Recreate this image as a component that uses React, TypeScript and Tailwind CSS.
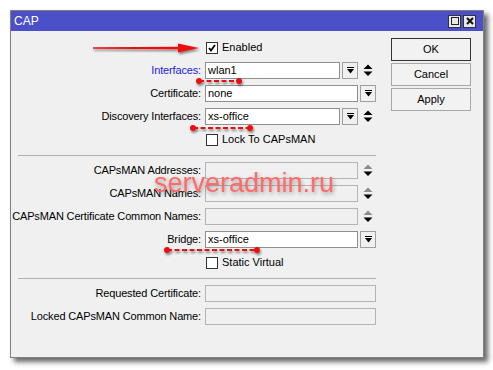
import React from "react";

function DropIcon() {
  return (
    <svg width="7" height="7" viewBox="0 0 7 7">
      <rect x="0" y="0" width="7" height="1" fill="#000" />
      <polygon points="0,2 7,2 3.5,6.5" fill="#000" />
    </svg>
  );
}

function DropBtn({ ml = "ml-[2px]" }: { ml?: string }) {
  return (
    <div
      className={`${ml} w-[16px] h-[17px] shrink-0 border border-[#a0a0a0] bg-[#f0f0f0] flex items-center justify-center`}
    >
      <DropIcon />
    </div>
  );
}

function Spin({ top = "#000" }: { top?: string }) {
  return (
    <div className="w-[18px] h-[17px] flex items-center pl-[5px]">
      <svg width="10" height="13" viewBox="0 0 10 13">
        <polygon points="5,0.5 9.5,5 0.5,5" fill={top} />
        <polygon points="0.5,7.5 9.5,7.5 5,12" fill="#000" />
      </svg>
    </div>
  );
}

function Input({ value, disabled }: { value?: string; disabled?: boolean }) {
  return (
    <div
      className={`flex-1 h-[17px] border ${
        disabled ? "border-[#b4b4b4] bg-[#f0f0f0]" : "border-[#8f8f8f] bg-white"
      } pl-[2px] text-[11px] leading-[15px] text-black`}
    >
      {value}
    </div>
  );
}

function Row({
  label,
  blue,
  children,
}: {
  label: string;
  blue?: boolean;
  children: React.ReactNode;
}) {
  return (
    <div className="flex items-center h-[17px]">
      <div
        className={`w-[190px] text-right text-[11px] leading-[17px] tracking-[-0.15px] whitespace-nowrap ${
          blue ? "text-[#1c1ce0]" : "text-black"
        }`}
      >
        {label}
      </div>
      <div className="ml-[4px] w-[171px] flex h-[17px]">{children}</div>
    </div>
  );
}

function Check({ label, checked }: { label: string; checked?: boolean }) {
  return (
    <div className="flex items-center h-[17px]">
      <div className="w-[190px]" />
      <div className="ml-[5px] flex items-center">
        <div className="w-[12px] h-[12px] border border-[#333] bg-white flex items-center justify-center">
          {checked && (
            <svg width="8" height="8" viewBox="0 0 8 8">
              <polyline
                points="1,4 3,6.5 7,1"
                fill="none"
                stroke="#000"
                strokeWidth="1.8"
              />
            </svg>
          )}
        </div>
        <span className="ml-[4px] text-[11px] leading-[17px] text-black">{label}</span>
      </div>
    </div>
  );
}

function Sep() {
  return <div className="ml-[7px] mt-[1px] w-[358px] h-[1px] bg-[#b0b0b0]" />;
}

function Btn({ label, focused }: { label: string; focused?: boolean }) {
  return (
    <div
      className={`w-[80px] h-[23px] flex items-center justify-center border ${
        focused ? "border-[#333]" : "border-[#a8a8a8]"
      } bg-[#f2f2f2] text-[11px] text-black`}
    >
      {label}
    </div>
  );
}

export default function App() {
  return (
    <div className="relative w-[493px] h-[370px] bg-white pt-[10px] pl-[10px] font-['Liberation_Sans',Arial,sans-serif] overflow-hidden">
      <div className="w-[474px] h-[348px] border border-[#808080] bg-[#f0f0f0] flex flex-col shadow-[4px_4px_5px_rgba(0,0,0,0.6)]">
        <div className="h-[20px] bg-[#4b4fc8] flex items-center pl-[3px] pr-[7px]">
          <span className="text-white text-[12px] leading-[20px]">CAP</span>
          <div className="ml-auto flex gap-[2px]">
            <div className="w-[13px] h-[13px] border border-[#333] bg-[#e8e8e8] flex items-center justify-center">
              <div className="w-[8px] h-[8px] border border-[#222]" />
            </div>
            <div className="w-[13px] h-[13px] border border-[#333] bg-[#e8e8e8] flex items-center justify-center">
              <svg width="8" height="8" viewBox="0 0 8 8">
                <path d="M1 1 L7 7 M7 1 L1 7" stroke="#111" strokeWidth="2" />
              </svg>
            </div>
          </div>
        </div>
        <div className="flex flex-1">
          <div className="flex flex-col gap-[6px] pt-[8px]">
            <Check label="Enabled" checked />
            <Row label="Interfaces:" blue>
              <div className="flex w-[153px]">
                <Input value="wlan1" />
                <DropBtn />
              </div>
              <Spin />
            </Row>
            <Row label="Certificate:">
              <div className="flex w-[153px]">
                <Input value="none" />
              </div>
              <DropBtn />
            </Row>
            <Row label="Discovery Interfaces:">
              <div className="flex w-[153px]">
                <Input value="xs-office" />
                <DropBtn />
              </div>
              <Spin />
            </Row>
            <Check label="Lock To CAPsMAN" />
            <Sep />
            <Row label="CAPsMAN Addresses:">
              <div className="flex w-[153px]">
                <Input disabled />
              </div>
              <Spin top="#8a8f8a" />
            </Row>
            <Row label="CAPsMAN Names:">
              <div className="flex w-[153px]">
                <Input disabled />
              </div>
              <Spin top="#8a8f8a" />
            </Row>
            <Row label="CAPsMAN Certificate Common Names:">
              <div className="flex w-[153px]">
                <Input disabled />
              </div>
              <Spin top="#8a8f8a" />
            </Row>
            <Row label="Bridge:">
              <div className="flex w-[153px]">
                <Input value="xs-office" />
              </div>
              <DropBtn />
            </Row>
            <Check label="Static Virtual" />
            <Sep />
            <Row label="Requested Certificate:">
              <Input disabled />
            </Row>
            <Row label="Locked CAPsMAN Common Name:">
              <Input disabled />
            </Row>
          </div>
          <div className="ml-[15px] pt-[7px] flex flex-col gap-[2px]">
            <Btn label="OK" focused />
            <Btn label="Cancel" />
            <Btn label="Apply" />
          </div>
        </div>
      </div>

      <div className="absolute left-[154px] top-[170px] text-[27px] leading-[27px] text-[#ff6a6a] whitespace-nowrap drop-shadow-[1px_2px_2px_rgba(0,0,0,0.35)]">
        serveradmin.ru
      </div>

      <svg
        className="absolute left-0 top-0 pointer-events-none"
        width="493"
        height="370"
        viewBox="0 0 493 370"
      >
        <defs>
          <filter id="sh" x="-20%" y="-50%" width="140%" height="300%">
            <feDropShadow dx="1" dy="2" stdDeviation="1.3" floodColor="#000" floodOpacity="0.45" />
          </filter>
        </defs>
        <g filter="url(#sh)">
          <path d="M93 47.3 L180 46.8 L180 49.2 L93 48.7 Z" fill="#ee1111" />
          <polygon points="178,43.5 199,48 178,52.5" fill="#ee1111" />
        </g>
        <g filter="url(#sh)" fill="#ee1111" stroke="#ee1111">
          <line x1="199" y1="81" x2="239" y2="81" strokeWidth="2" strokeDasharray="5 2.5" />
          <circle cx="199" cy="81" r="3" stroke="none" />
          <circle cx="239" cy="81" r="3" stroke="none" />
          <line x1="193" y1="128" x2="250" y2="128" strokeWidth="2" strokeDasharray="5 2.5" />
          <circle cx="193" cy="128" r="3" stroke="none" />
          <circle cx="250" cy="128" r="3" stroke="none" />
          <line x1="167" y1="250" x2="257" y2="250" strokeWidth="2" strokeDasharray="5 2.5" />
          <circle cx="167" cy="250" r="3" stroke="none" />
          <circle cx="257" cy="250" r="3" stroke="none" />
        </g>
      </svg>
    </div>
  );
}
